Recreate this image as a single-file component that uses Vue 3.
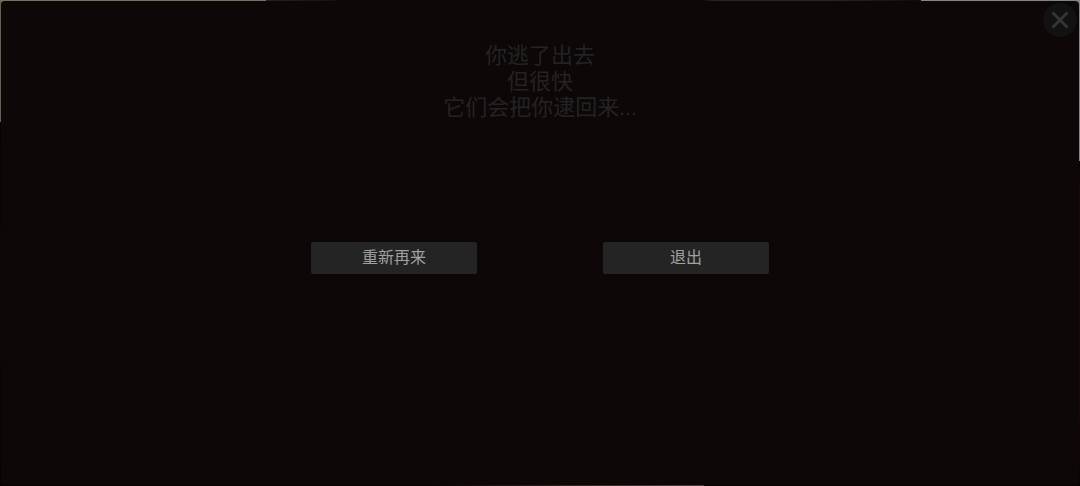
<!-- EndingDialog.vue -->
<template>
  <div class="scene">
    <main class="dialog">
      <button class="close-button" type="button" aria-label="关闭" @click="visible = false">
        <svg class="close-icon" viewBox="0 0 18 18" aria-hidden="true">
          <path d="M1.5 1.5 L16.5 16.5 M16.5 1.5 L1.5 16.5" />
        </svg>
      </button>

      <template v-if="visible">
        <p class="message">
          <span v-for="line in lines" :key="line" class="message-line">{{ line }}</span>
        </p>

        <div class="actions">
          <button
            v-for="action in actions"
            :key="action.name"
            class="action-button"
            type="button"
            @click="choose(action.name)"
          >
            {{ action.label }}
          </button>
        </div>
      </template>
    </main>
  </div>
</template>

<script setup>
import { ref } from 'vue';

const emit = defineEmits(['restart', 'quit']);

const visible = ref(true);

const lines = ['你逃了出去', '但很快', '它们会把你逮回来...'];

const actions = [
  { name: 'restart', label: '重新再来' },
  { name: 'quit', label: '退出' },
];

const choose = (name) => {
  emit(name);
};
</script>

<style>
body {
  margin: 0;
  background-color: #050202;
}
</style>

<style scoped>
/* The room behind the dialog, only visible as a thin edge */
.scene {
  box-sizing: border-box;
  display: flex;
  min-height: 100vh;
  padding: 1px;
  background-color: #080303;
  background-image:
    linear-gradient(to right, #77715f 24.6%, #2b2119 24.6%, #1b100e 31%, #100606 31%, #100606 65%, #30221b 66%, #30221b 77.5%, #120a09 85.3%, #858585 85.3%),
    linear-gradient(to right, #080303 40%, #35211f 52%, #4a3a3a 65.2%, #080303 65.2%),
    linear-gradient(to bottom, #67614f 25.2%, #080303 25.2%, #100505 60%, #080303),
    linear-gradient(to bottom, #858585 33.2%, #050202 33.2%, #1b0b08 40%, #1b0b08 80%, #080303);
  background-position: top, bottom, left, right;
  background-size: 100% 1px, 100% 1px, 50% 100%, 50% 100%;
  background-repeat: no-repeat;
}

.dialog {
  position: relative;
  flex: 1;
  display: flex;
  flex-direction: column;
  align-items: center;
  padding-top: 42px;
  border-radius: 4px;
  background-color: #0d0707;
  font-family: Roboto, "Noto Sans CJK SC", sans-serif;
}

.close-button {
  position: absolute;
  top: 2px;
  right: 2px;
  display: flex;
  align-items: center;
  justify-content: center;
  width: 34px;
  height: 34px;
  padding: 0;
  border: none;
  border-radius: 50%;
  background-color: #121212;
  cursor: pointer;
}

.close-icon {
  width: 18px;
  height: 18px;
  fill: none;
  stroke: #363636;
  stroke-width: 2.6;
}

.message {
  margin: 0;
  font-size: 22px;
  line-height: 26px;
  text-align: center;
  color: #232323;
}

.message-line {
  display: block;
}

.actions {
  display: flex;
  flex-wrap: wrap;
  justify-content: center;
  gap: 32px 126px;
  margin-top: 121px;
}

.action-button {
  width: 166px;
  height: 32px;
  padding: 0;
  border: none;
  border-radius: 2px;
  background-color: #242424;
  font-family: inherit;
  font-size: 16px;
  line-height: 32px;
  color: #a0a0a0;
  cursor: pointer;
}

.action-button:hover {
  background-color: #2e2e2e;
}
</style>
